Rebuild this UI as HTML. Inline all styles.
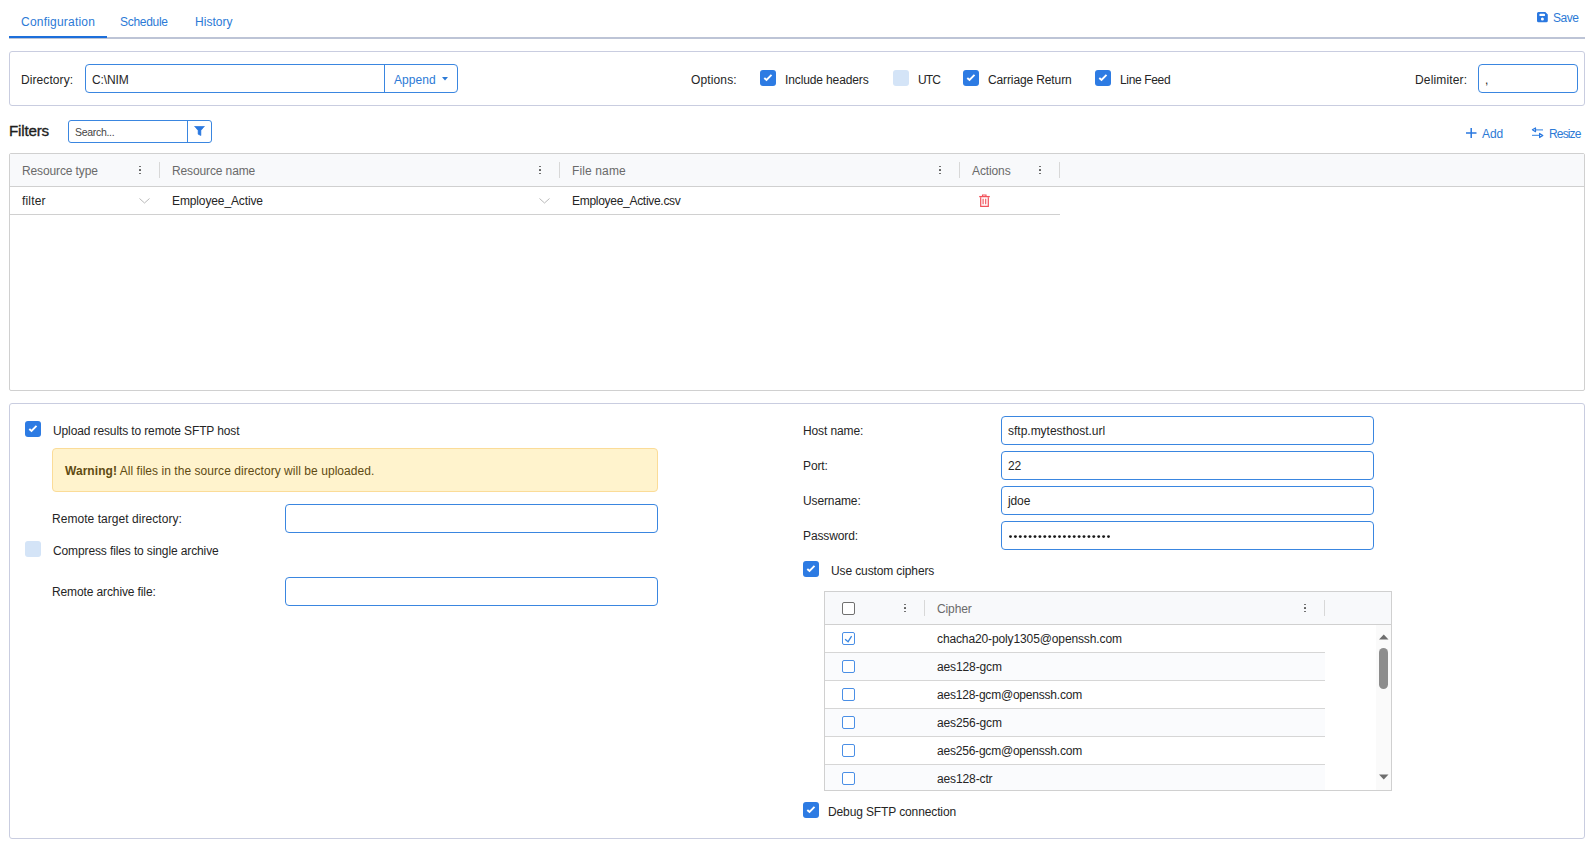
<!DOCTYPE html>
<html><head><meta charset="utf-8">
<style>
*{box-sizing:border-box;margin:0;padding:0}
html,body{width:1592px;height:846px;overflow:hidden;background:#fff}
body{position:relative;font-family:"Liberation Sans",sans-serif;font-size:12px;color:#252525}
.a{position:absolute}
.t{position:absolute;white-space:nowrap;line-height:14px;letter-spacing:-0.12px}
.blue{color:#2c7ad6}
.cb{position:absolute;width:16px;height:16px;border-radius:3px;background:#2d7be3}
.cb svg{position:absolute;left:0;top:0}
.cbu{position:absolute;width:16px;height:16px;border-radius:3px;background:#d4e4f7}
.inp{position:absolute;border:1px solid #3a86e0;border-radius:4px;background:#fff}
.panel{position:absolute;border:1px solid #c9cde0;border-radius:3px}
.hd{color:#6a6a6a}
.keb{position:absolute;width:2px}
.keb i{position:absolute;left:0;width:1.7px;height:1.7px;background:#5f5f5f;border-radius:0.5px}
.sep{position:absolute;width:1px;background:#d8d8d8}
.ccb{position:absolute;width:13px;height:13px;border:1px solid #4a8fe6;border-radius:2px;background:#fff}
</style></head><body>

<!-- Tabs -->
<div class="t blue" style="left:21px;top:15px;letter-spacing:0.21px;">Configuration</div>
<div class="t blue" style="left:120px;top:15px;letter-spacing:-0.3px">Schedule</div>
<div class="t blue" style="left:195px;top:15px;letter-spacing:0.03px;">History</div>
<div class="a" style="left:9px;top:37px;width:1576px;height:2px;background:#bdc4d6"></div>
<div class="a" style="left:9px;top:36px;width:98px;height:2px;background:#1c6fdb"></div>

<!-- Save -->
<svg class="a" style="left:1537px;top:12px" width="11" height="11" viewBox="0 0 11 11"><path d="M1.5 0H8.3L10.8 2.5V8.8A1.5 1.5 0 0 1 9.3 10.3H1.5A1.5 1.5 0 0 1 0 8.8V1.5A1.5 1.5 0 0 1 1.5 0Z" fill="#2a78e0"/><rect x="2.4" y="1.7" width="5.6" height="2.4" rx="0.9" fill="#fff"/><circle cx="5.4" cy="7.1" r="1.5" fill="#fff"/></svg>
<div class="t blue" style="left:1553px;top:11px;letter-spacing:-0.45px">Save</div>

<!-- Options panel -->
<div class="panel" style="left:9px;top:51px;width:1576px;height:55px;"></div>
<div class="t" style="left:21px;top:73px;letter-spacing:0.08px;">Directory:</div>
<div class="inp" style="left:85px;top:64px;width:373px;height:29px;"></div>
<div class="a" style="left:384px;top:64px;width:1px;height:29px;background:#3a86e0"></div>
<div class="t" style="left:92px;top:73px;">C:\NIM</div>
<div class="t blue" style="left:394px;top:73px;letter-spacing:0.08px;">Append</div>
<svg class="a" style="left:442px;top:77px" width="6" height="4"><path d="M0 0H6L3 3.5Z" fill="#2c7ad6"/></svg>

<div class="t" style="left:691px;top:73px;letter-spacing:0.13px;">Options:</div>
<div class="cb" style="left:760px;top:70px;"><svg width="16" height="16"><path d="M4.3 8L6.5 10L11.5 4.9" stroke="#fff" stroke-width="1.9" fill="none"/></svg></div>
<div class="t" style="left:785px;top:73px;">Include headers</div>
<div class="cbu" style="left:893px;top:70px;"></div>
<div class="t" style="left:918px;top:73px;letter-spacing:-0.9px">UTC</div>
<div class="cb" style="left:963px;top:70px;"><svg width="16" height="16"><path d="M4.3 8L6.5 10L11.5 4.9" stroke="#fff" stroke-width="1.9" fill="none"/></svg></div>
<div class="t" style="left:988px;top:73px;">Carriage Return</div>
<div class="cb" style="left:1095px;top:70px;"><svg width="16" height="16"><path d="M4.3 8L6.5 10L11.5 4.9" stroke="#fff" stroke-width="1.9" fill="none"/></svg></div>
<div class="t" style="left:1120px;top:73px;letter-spacing:-0.35px">Line Feed</div>

<div class="t" style="left:1415px;top:73px;letter-spacing:0.15px;">Delimiter:</div>
<div class="inp" style="left:1478px;top:64px;width:100px;height:29px;"></div>
<div class="t" style="left:1485px;top:73px;">,</div>

<!-- Filters -->
<div class="t" style="left:9px;top:121.5px;font-size:15.2px;line-height:18px;color:#1e1e1e;letter-spacing:-0.2px;-webkit-text-stroke:0.35px #1e1e1e">Filters</div>
<div class="inp" style="left:68px;top:120px;width:144px;height:23px;border-radius:3px"></div>
<div class="a" style="left:187px;top:120px;width:1px;height:23px;background:#3a86e0"></div>
<div class="t" style="left:75px;top:125px;font-size:10.5px;color:#444;letter-spacing:-0.3px">Search...</div>
<svg class="a" style="left:194px;top:126px" width="11" height="10" viewBox="0 0 11 10"><path d="M0.5 0.2H10.5L6.9 4.4V9.6L4.1 8.2V4.4Z" fill="#2a78e0" stroke="#2a78e0" stroke-width="0.6" stroke-linejoin="round"/></svg>

<svg class="a" style="left:1466px;top:128px" width="11" height="10"><path d="M5.2 0V10M0 5H10.5" stroke="#2a78e0" stroke-width="1.5"/></svg>
<div class="t blue" style="left:1482px;top:127px;">Add</div>
<svg class="a" style="left:1531px;top:127px" width="13" height="12" viewBox="0 0 13 12"><path d="M4.5 2.8H12M1 8.4H8.6" stroke="#5a9ae6" stroke-width="1.3"/><path d="M4.5 0.9L1.4 2.8L4.5 4.7Z" stroke="#2a78e0" stroke-width="1.2" fill="none" stroke-linejoin="round"/><path d="M8.6 6.4L11.8 8.4L8.6 10.5Z" stroke="#2a78e0" stroke-width="1.2" fill="none" stroke-linejoin="round"/></svg>
<div class="t blue" style="left:1549px;top:127px;letter-spacing:-0.85px">Resize</div>

<!-- Grid -->
<div class="a" style="left:9px;top:153px;width:1576px;height:238px;border:1px solid #d0d0d0;border-radius:2px"></div>
<div class="a" style="left:10px;top:154px;width:1574px;height:33px;background:#f8f9fb;border-bottom:1px solid #d0d0d0"></div>
<div class="t hd" style="left:22px;top:164px;">Resource type</div>
<div class="t hd" style="left:172px;top:164px;">Resource name</div>
<div class="t hd" style="left:572px;top:164px;letter-spacing:0.13px;">File name</div>
<div class="t hd" style="left:972px;top:164px;">Actions</div>
<div class="keb" style="left:139px;top:165px;height:10px"><i style="top:0.5px"></i><i style="top:4px"></i><i style="top:7.5px"></i></div>
<div class="keb" style="left:539px;top:165px;height:10px"><i style="top:0.5px"></i><i style="top:4px"></i><i style="top:7.5px"></i></div>
<div class="keb" style="left:939px;top:165px;height:10px"><i style="top:0.5px"></i><i style="top:4px"></i><i style="top:7.5px"></i></div>
<div class="keb" style="left:1039px;top:165px;height:10px"><i style="top:0.5px"></i><i style="top:4px"></i><i style="top:7.5px"></i></div>
<div class="sep" style="left:159px;top:162px;height:16px"></div>
<div class="sep" style="left:559px;top:162px;height:16px"></div>
<div class="sep" style="left:959px;top:162px;height:16px"></div>
<div class="sep" style="left:1059px;top:162px;height:16px"></div>
<div class="a" style="left:10px;top:214px;width:1050px;height:1px;background:#d0d0d0"></div>
<div class="t" style="left:22px;top:194px;letter-spacing:0.18px;">filter</div>
<svg class="a" style="left:139px;top:198px" width="11" height="6"><path d="M0.5 0.5L5.5 5L10.5 0.5" stroke="#b9b9b9" stroke-width="1" fill="none"/></svg>
<div class="t" style="left:172px;top:194px;">Employee_Active</div>
<svg class="a" style="left:539px;top:198px" width="11" height="6"><path d="M0.5 0.5L5.5 5L10.5 0.5" stroke="#b9b9b9" stroke-width="1" fill="none"/></svg>
<div class="t" style="left:572px;top:194px;letter-spacing:-0.29px;">Employee_Active.csv</div>
<svg class="a" style="left:979px;top:194px" width="11" height="13" viewBox="0 0 11 13"><path d="M0.2 2.6H10.8" stroke="#f1525b" stroke-width="1.3"/><path d="M3.5 2.2V1H7V2.2" stroke="#f1525b" stroke-width="1.1" fill="none"/><path d="M1.7 3.2V12.3H9.3V3.2" stroke="#f1525b" stroke-width="1.2" fill="none"/><path d="M4.1 4.8V10.3M6.7 4.8V10.3" stroke="#f1525b" stroke-width="1.1"/></svg>

<!-- Bottom panel -->
<div class="panel" style="left:9px;top:403px;width:1576px;height:436px;"></div>
<div class="cb" style="left:25px;top:421px;"><svg width="16" height="16"><path d="M4.3 8L6.5 10L11.5 4.9" stroke="#fff" stroke-width="1.9" fill="none"/></svg></div>
<div class="t" style="left:53px;top:424px;">Upload results to remote SFTP host</div>
<div class="a" style="left:52px;top:448px;width:606px;height:44px;background:#fff3cd;border:1px solid #fbdc98;border-radius:4px"></div>
<div class="t" style="left:65px;top:464px;color:#5f4b12;letter-spacing:0.05px"><b>Warning!</b> All files in the source directory will be uploaded.</div>
<div class="t" style="left:52px;top:512px;letter-spacing:0.05px;">Remote target directory:</div>
<div class="inp" style="left:285px;top:504px;width:373px;height:29px;"></div>
<div class="cbu" style="left:25px;top:541px;"></div>
<div class="t" style="left:53px;top:544px;">Compress files to single archive</div>
<div class="t" style="left:52px;top:585px;">Remote archive file:</div>
<div class="inp" style="left:285px;top:577px;width:373px;height:29px;"></div>

<div class="t" style="left:803px;top:424px;">Host name:</div>
<div class="inp" style="left:1001px;top:416px;width:373px;height:29px;"></div>
<div class="t" style="left:1008px;top:424px;letter-spacing:-0.01px;">sftp.mytesthost.url</div>
<div class="t" style="left:803px;top:459px;">Port:</div>
<div class="inp" style="left:1001px;top:451px;width:373px;height:29px;"></div>
<div class="t" style="left:1008px;top:459px;">22</div>
<div class="t" style="left:803px;top:494px;">Username:</div>
<div class="inp" style="left:1001px;top:486px;width:373px;height:29px;"></div>
<div class="t" style="left:1008px;top:494px;">jdoe</div>
<div class="t" style="left:803px;top:529px;">Password:</div>
<div class="inp" style="left:1001px;top:521px;width:373px;height:29px;"></div>
<svg class="a" style="left:1009px;top:535px" width="104" height="4" fill="#1a1a1a"><circle cx="1.50" cy="1.6" r="1.45"/><circle cx="6.40" cy="1.6" r="1.45"/><circle cx="11.30" cy="1.6" r="1.45"/><circle cx="16.20" cy="1.6" r="1.45"/><circle cx="21.10" cy="1.6" r="1.45"/><circle cx="26.00" cy="1.6" r="1.45"/><circle cx="30.90" cy="1.6" r="1.45"/><circle cx="35.80" cy="1.6" r="1.45"/><circle cx="40.70" cy="1.6" r="1.45"/><circle cx="45.60" cy="1.6" r="1.45"/><circle cx="50.50" cy="1.6" r="1.45"/><circle cx="55.40" cy="1.6" r="1.45"/><circle cx="60.30" cy="1.6" r="1.45"/><circle cx="65.20" cy="1.6" r="1.45"/><circle cx="70.10" cy="1.6" r="1.45"/><circle cx="75.00" cy="1.6" r="1.45"/><circle cx="79.90" cy="1.6" r="1.45"/><circle cx="84.80" cy="1.6" r="1.45"/><circle cx="89.70" cy="1.6" r="1.45"/><circle cx="94.60" cy="1.6" r="1.45"/><circle cx="99.50" cy="1.6" r="1.45"/></svg>
<div class="cb" style="left:803px;top:561px;"><svg width="16" height="16"><path d="M4.3 8L6.5 10L11.5 4.9" stroke="#fff" stroke-width="1.9" fill="none"/></svg></div>
<div class="t" style="left:831px;top:564px;">Use custom ciphers</div>

<!-- Cipher grid -->
<div class="a" style="left:824px;top:591px;width:568px;height:200px;border:1px solid #d0d0d0;overflow:hidden">
<div class="a" style="left:0;top:0;width:566px;height:33px;background:#f8f9fb;border-bottom:1px solid #d0d0d0"></div>
<div class="ccb" style="left:17px;top:10px;border-color:#707070"></div>
<div class="keb" style="left:79px;top:11px;height:10px"><i style="top:0.5px"></i><i style="top:4px"></i><i style="top:7.5px"></i></div>
<div class="sep" style="left:99px;top:8px;height:16px"></div>
<div class="t hd" style="left:112px;top:10px;">Cipher</div>
<div class="keb" style="left:479px;top:11px;height:10px"><i style="top:0.5px"></i><i style="top:4px"></i><i style="top:7.5px"></i></div>
<div class="sep" style="left:499px;top:8px;height:16px"></div>
<div class="a" style="left:0;top:60px;width:500px;height:1px;background:#d6d6d6"></div>
<div class="ccb" style="left:17px;top:40px"><svg width="13" height="13" style="position:absolute;left:-1px;top:-1px"><path d="M3.1 7.2L6.1 9.7L9.6 4.2" stroke="#3a86e0" stroke-width="1.3" fill="none"/></svg></div>
<div class="t" style="left:112px;top:40px;">chacha20-poly1305@openssh.com</div>
<div class="a" style="left:0;top:61px;width:500px;height:27px;background:#fafbfd"></div>
<div class="a" style="left:0;top:88px;width:500px;height:1px;background:#d6d6d6"></div>
<div class="ccb" style="left:17px;top:68px"></div>
<div class="t" style="left:112px;top:68px;">aes128-gcm</div>
<div class="a" style="left:0;top:116px;width:500px;height:1px;background:#d6d6d6"></div>
<div class="ccb" style="left:17px;top:96px"></div>
<div class="t" style="left:112px;top:96px;letter-spacing:-0.21px;">aes128-gcm@openssh.com</div>
<div class="a" style="left:0;top:117px;width:500px;height:27px;background:#fafbfd"></div>
<div class="a" style="left:0;top:144px;width:500px;height:1px;background:#d6d6d6"></div>
<div class="ccb" style="left:17px;top:124px"></div>
<div class="t" style="left:112px;top:124px;">aes256-gcm</div>
<div class="a" style="left:0;top:172px;width:500px;height:1px;background:#d6d6d6"></div>
<div class="ccb" style="left:17px;top:152px"></div>
<div class="t" style="left:112px;top:152px;letter-spacing:-0.21px;">aes256-gcm@openssh.com</div>
<div class="a" style="left:0;top:173px;width:500px;height:27px;background:#fafbfd"></div>
<div class="a" style="left:0;top:200px;width:500px;height:1px;background:#d6d6d6"></div>
<div class="ccb" style="left:17px;top:180px"></div>
<div class="t" style="left:112px;top:180px;">aes128-ctr</div>
<div class="a" style="left:551px;top:33px;width:15px;height:166px;background:#fafafa"></div>
<svg class="a" style="left:554px;top:42px" width="10" height="6"><path d="M0 5.5H9.5L4.75 0.5Z" fill="#6e6e6e"/></svg>
<div class="a" style="left:554px;top:56px;width:9px;height:41px;background:#8d8d8d;border-radius:4.5px"></div>
<svg class="a" style="left:554px;top:182px" width="10" height="6"><path d="M0 0.5H9.5L4.75 5.5Z" fill="#6e6e6e"/></svg>
</div>

<div class="cb" style="left:803px;top:802px;"><svg width="16" height="16"><path d="M4.3 8L6.5 10L11.5 4.9" stroke="#fff" stroke-width="1.9" fill="none"/></svg></div>
<div class="t" style="left:828px;top:805px;">Debug SFTP connection</div>

</body></html>
